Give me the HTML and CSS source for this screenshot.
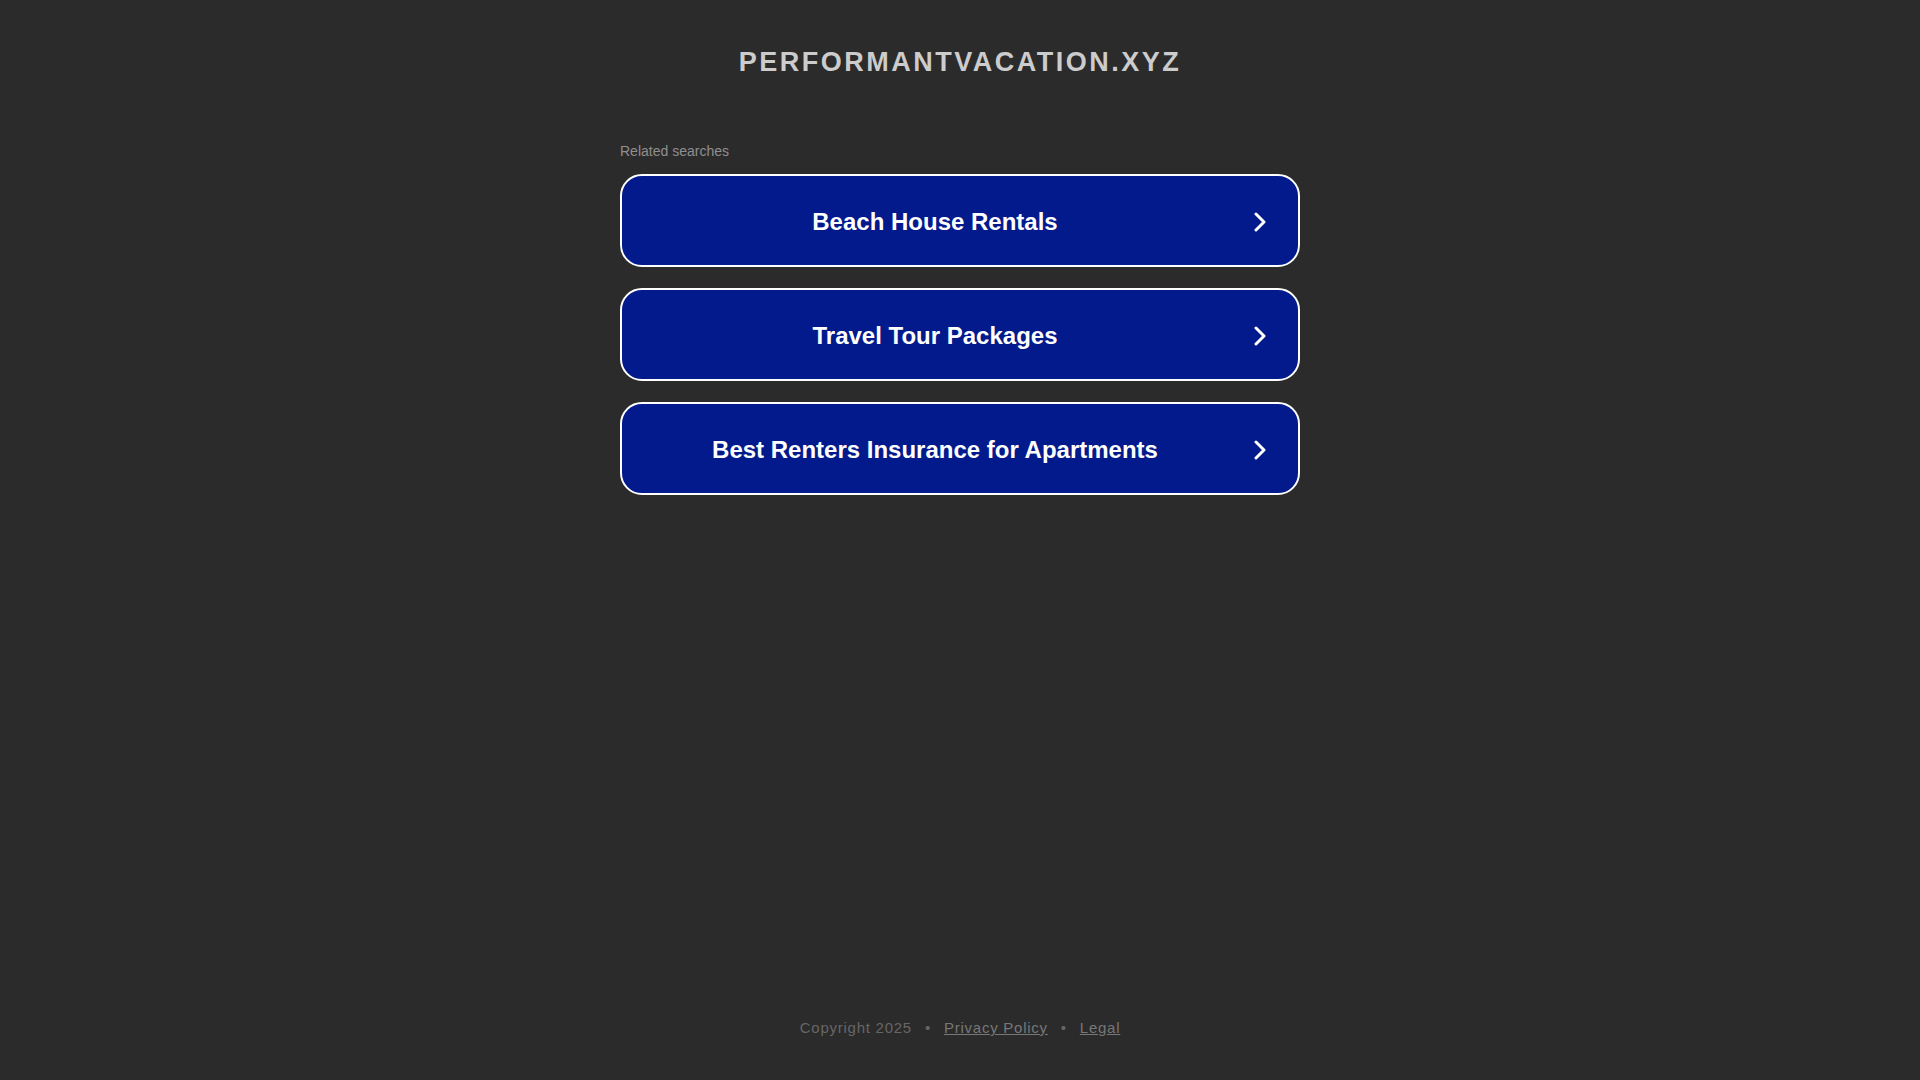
FILE: index.html
```html
<!DOCTYPE html>
<html lang="en">
<head>
<meta charset="utf-8">
<title>performantvacation.xyz</title>
<link rel="stylesheet" href="styles.css">
</head>
<body>
<div class="page">
  <header class="header">
    <h1 class="title">PERFORMANTVACATION.XYZ</h1>
  </header>
  <main class="content">
    <div class="label">Related searches</div>
    <div class="list">
      <a class="item" href="#"><span class="item-text">Beach House Rentals</span><svg class="chev" viewBox="0 0 12 20" width="12" height="20"><path d="M2 2 L10 10 L2 18" fill="none" stroke="#fff" stroke-width="3" stroke-linecap="round" stroke-linejoin="round"/></svg></a>
      <a class="item" href="#"><span class="item-text">Travel Tour Packages</span><svg class="chev" viewBox="0 0 12 20" width="12" height="20"><path d="M2 2 L10 10 L2 18" fill="none" stroke="#fff" stroke-width="3" stroke-linecap="round" stroke-linejoin="round"/></svg></a>
      <a class="item" href="#"><span class="item-text">Best Renters Insurance for Apartments</span><svg class="chev" viewBox="0 0 12 20" width="12" height="20"><path d="M2 2 L10 10 L2 18" fill="none" stroke="#fff" stroke-width="3" stroke-linecap="round" stroke-linejoin="round"/></svg></a>
    </div>
  </main>
  <footer class="footer">
    <span>Copyright 2025</span><span class="dot">•</span><a href="#">Privacy Policy</a><span class="dot">•</span><a href="#">Legal</a>
  </footer>
</div>
</body>
</html>
```
FILE: styles.css
```css
html, body {
  margin: 0;
  padding: 0;
  background: #2b2b2b;
}
body {
  font-family: "Liberation Sans", Arial, sans-serif;
}
.page {
  min-height: 100vh;
  display: flex;
  flex-direction: column;
  align-items: center;
}
.header {
  padding-top: 47px;
}
.title {
  margin: 0;
  font-size: 27px;
  line-height: 31px;
  font-weight: bold;
  letter-spacing: 2.5px;
  color: #cccccc;
  text-align: center;
}
.content {
  width: 680px;
  margin-top: 65px;
}
.label {
  font-size: 14px;
  line-height: 16px;
  color: #8f8f8f;
  margin-bottom: 15px;
}
.list {
  display: flex;
  flex-direction: column;
  gap: 21px;
}
.item {
  box-sizing: border-box;
  height: 93px;
  display: flex;
  align-items: center;
  background: #021a8c;
  border: 2px solid #ffffff;
  border-radius: 22px;
  text-decoration: none;
  color: #ffffff;
  padding-right: 32px;
  padding-top: 2px;
}
.item-text {
  flex: 1;
  text-align: center;
  font-size: 24px;
  font-weight: bold;
}
.chev {
  display: block;
  margin-left: 6px;
}
.footer {
  margin-top: auto;
  padding-bottom: 44px;
  font-size: 15px;
  line-height: 17px;
  letter-spacing: 0.75px;
  color: #666666;
  display: flex;
  align-items: center;
}
.footer a {
  color: #777777;
  text-decoration: underline;
}
.dot {
  margin: 0 13px;
  color: #666666;
}
```
